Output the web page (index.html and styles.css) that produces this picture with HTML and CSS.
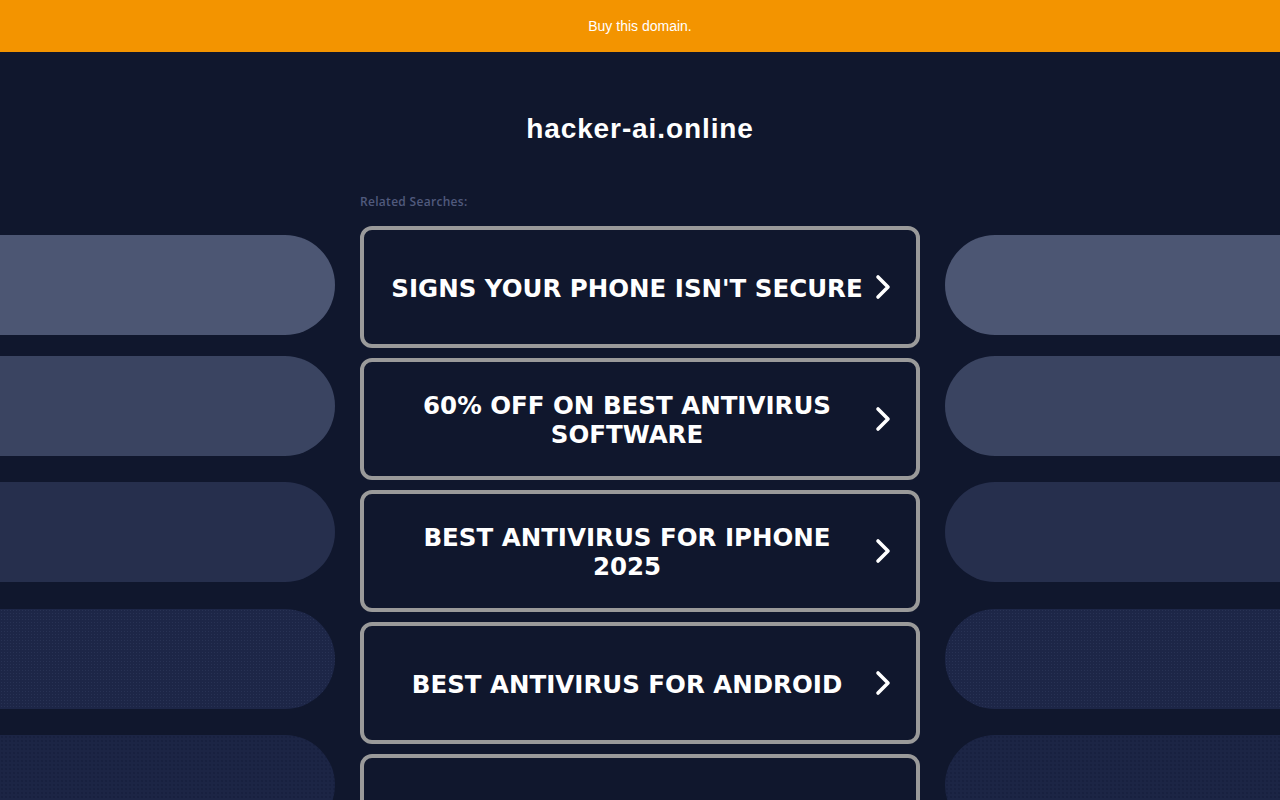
FILE: index.html
```html
<!DOCTYPE html>
<html lang="en">
<head>
<meta charset="utf-8">
<title>hacker-ai.online</title>
<link rel="stylesheet" href="styles.css">
</head>
<body>
<div class="topbar">Buy this domain.</div>
<main class="page">
  <h1 class="domain">hacker-ai.online</h1>
  <div class="layout">
    <div class="side side-left">
      <div class="pill p1"></div>
      <div class="pill p2"></div>
      <div class="pill p3"></div>
      <div class="pill p4"></div>
      <div class="pill p5"></div>
    </div>
    <div class="center">
      <div class="related">Related Searches:</div>
      <div class="list">
        <a class="search" href="#"><span class="label">SIGNS YOUR PHONE ISN'T SECURE</span><svg class="chev" viewBox="0 0 18 26" width="18" height="26"><polyline points="4,3 14,13 4,23"/></svg></a>
        <a class="search" href="#"><span class="label">60% OFF ON BEST ANTIVIRUS SOFTWARE</span><svg class="chev" viewBox="0 0 18 26" width="18" height="26"><polyline points="4,3 14,13 4,23"/></svg></a>
        <a class="search" href="#"><span class="label">BEST ANTIVIRUS FOR IPHONE 2025</span><svg class="chev" viewBox="0 0 18 26" width="18" height="26"><polyline points="4,3 14,13 4,23"/></svg></a>
        <a class="search" href="#"><span class="label">BEST ANTIVIRUS FOR ANDROID</span><svg class="chev" viewBox="0 0 18 26" width="18" height="26"><polyline points="4,3 14,13 4,23"/></svg></a>
        <a class="search" href="#"><span class="label"></span><svg class="chev" viewBox="0 0 18 26" width="18" height="26"><polyline points="4,3 14,13 4,23"/></svg></a>
      </div>
    </div>
    <div class="side side-right">
      <div class="pill p1"></div>
      <div class="pill p2"></div>
      <div class="pill p3"></div>
      <div class="pill p4"></div>
      <div class="pill p5"></div>
    </div>
  </div>
</main>
</body>
</html>
```

FILE: styles.css
```css
html, body {
  margin: 0;
  padding: 0;
}
body {
  background: #10172d;
  height: 800px;
  overflow: hidden;
  font-family: "Liberation Sans", Arial, sans-serif;
}
.topbar {
  height: 52px;
  background: #f39400;
  color: #ffffff;
  font-size: 14px;
  display: flex;
  align-items: center;
  justify-content: center;
}
.page {
  display: flex;
  flex-direction: column;
}
.domain {
  margin: 0 0 46px;
  padding-top: 61px;
  height: 32px;
  line-height: 32px;
  text-align: center;
  color: #ffffff;
  font-family: "Liberation Sans", Arial, sans-serif;
  font-weight: 700;
  font-size: 28px;
  letter-spacing: 0.9px;
}
.layout {
  display: grid;
  grid-template-columns: 335px 560px 335px;
  column-gap: 25px;
}
.side {
  padding-top: 44px;
  display: flex;
  flex-direction: column;
}
.pill {
  height: 100px;
  flex: none;
}
.pill + .pill { margin-top: 26px; }
.pill.p2 { margin-top: 21px; }
.pill.p4 { margin-top: 27px; }
.side-left .pill { border-radius: 0 50px 50px 0; }
.side-right .pill { border-radius: 50px 0 0 50px; }
.p1 { background: #4c5673; }
.p2 { background: #3a4461; }
.p3 { background: #262f4d; }
.p4 { background: #1d2647; background-image: radial-gradient(rgba(60, 72, 110, 0.35) 0.6px, transparent 0.8px); background-size: 3px 3px; }
.p5 { background: #1c2545; background-image: radial-gradient(rgba(10, 16, 40, 0.45) 0.6px, transparent 0.8px); background-size: 4px 4px; }
.center {
  padding-top: 3px;
  display: flex;
  flex-direction: column;
}
.related {
  font-family: "Open Sans", "Liberation Sans", sans-serif;
  font-size: 12px;
  font-weight: 600;
  letter-spacing: 0.3px;
  line-height: 16px;
  color: #505a7d;
  margin-bottom: 16px;
}
.list {
  display: flex;
  flex-direction: column;
  gap: 10px;
}
.search {
  box-sizing: border-box;
  height: 122px;
  border: 4px solid #9a9a9a;
  border-radius: 12px;
  display: flex;
  align-items: center;
  padding: 0 24px 0 16px;
  text-decoration: none;
  color: #ffffff;
  flex: none;
}
.label {
  flex: 1;
  text-align: center;
  font-family: "DejaVu Sans", Verdana, sans-serif;
  font-weight: 700;
  font-size: 24.5px;
  line-height: 29px;
  padding: 2px 8px 0;
}
.chev {
  flex: none;
}
.chev polyline {
  fill: none;
  stroke: #ffffff;
  stroke-width: 3.6;
  stroke-linecap: round;
  stroke-linejoin: round;
}
```
